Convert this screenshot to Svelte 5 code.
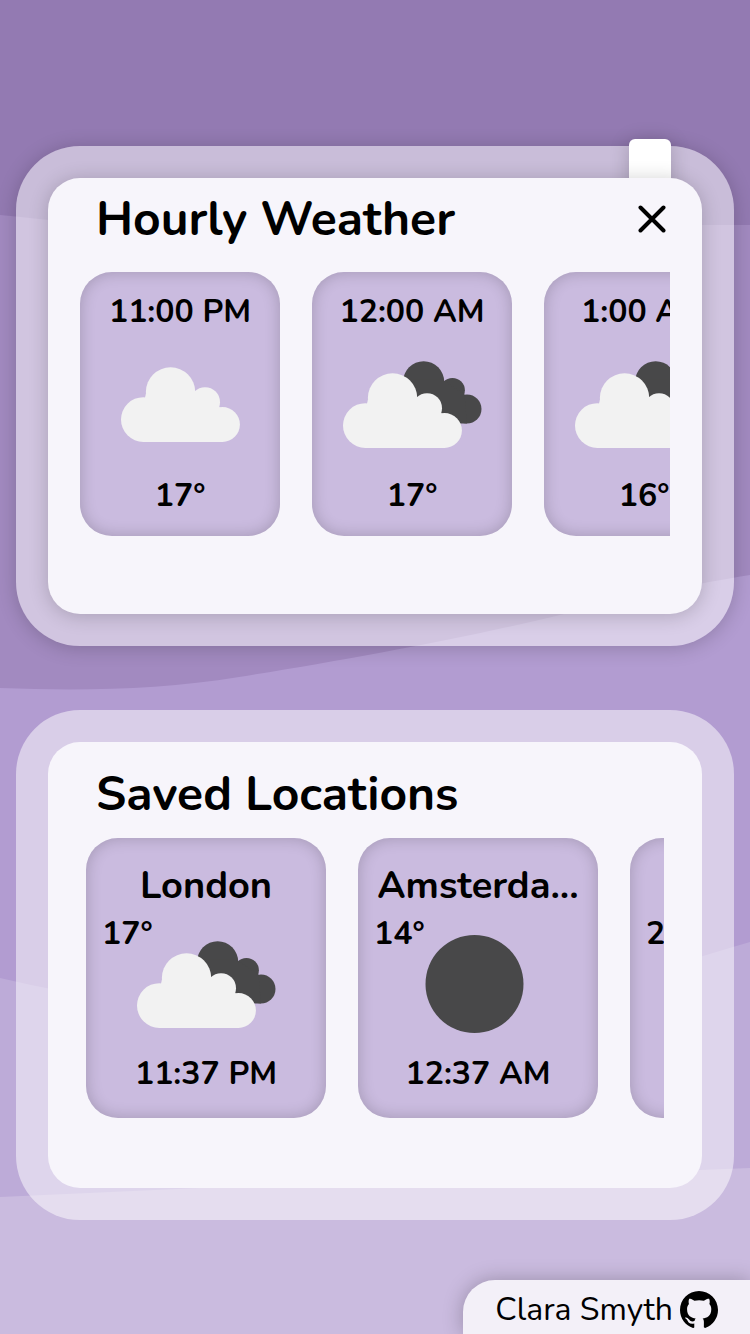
<script>
  const hours = [
    { time: '11:00 PM', icon: 'cloud', temp: 17 },
    { time: '12:00 AM', icon: 'clouds', temp: 17 },
    { time: '1:00 AM', icon: 'clouds', temp: 16 }
  ];

  const places = [
    { name: 'London', temp: 17, icon: 'clouds', time: '11:37 PM' },
    { name: 'Amsterdam', temp: 14, icon: 'moon', time: '12:37 AM' },
    { name: 'Tokyo', temp: 22, icon: 'cloud', time: '7:37 AM' }
  ];

  let showHourly = $state(true);

  const shorten = (name) => (name.length > 8 ? name.slice(0, 8) + '...' : name);
</script>

{#snippet cloud()}
  <circle cx="22.5" cy="52.5" r="22.5" />
  <circle cx="49.8" cy="24.8" r="24.8" />
  <circle cx="84.5" cy="35" r="15" />
  <circle cx="102" cy="57.5" r="17.5" />
  <path d="M22.5 75V38L26 22H72L99 40L102 75Z" />
{/snippet}

{#snippet weatherIcon(kind)}
  <svg class="weather" viewBox="0 0 140 88" aria-hidden="true">
    {#if kind === 'moon'}
      <circle class="dark" cx="66.5" cy="44" r="49" />
    {:else if kind === 'clouds'}
      <g class="dark" transform="translate(40.3 1.3) scale(0.83)">{@render cloud()}</g>
      <g class="light" transform="translate(1 13.3) scale(0.995)">{@render cloud()}</g>
    {:else}
      <g class="light" transform="translate(11 7.3) scale(0.995)">{@render cloud()}</g>
    {/if}
  </svg>
{/snippet}

<div class="page">
  <svg class="waves" viewBox="0 0 750 1334" preserveAspectRatio="none" aria-hidden="true">
    <rect width="750" height="1334" fill="#937ab2" />
    <path fill="#a28ac0" d="M0 215C200 234 330 262 450 250S640 225 700 225H750V1334H0Z" />
    <path fill="#b29cd1" d="M0 688C80 691 160 690 239 677C340 661 470 637 564 614C640 595 700 583 750 575V1334H0Z" />
    <path fill="#bdabd8" d="M0 978C120 1006 240 1020 380 1020S620 980 750 942V1334H0Z" />
    <path fill="#cabbdf" d="M0 1197L200 1188C380 1180 560 1176 750 1168V1334H0Z" />
  </svg>

  <main>
    {#if showHourly}
      <section class="frame raised" aria-labelledby="hourly-title">
        <span class="tab"></span>
        <div class="panel hourly">
          <header>
            <h2 id="hourly-title">Hourly Weather</h2>
            <button type="button" aria-label="Close" onclick={() => (showHourly = false)}>
              <svg viewBox="0 0 28 28" aria-hidden="true"><path d="M2.5 2.5L25.5 25.5M25.5 2.5L2.5 25.5" /></svg>
            </button>
          </header>
          <ul class="strip">
            {#each hours as hour}
              <li class="card hour">
                <span>{hour.time}</span>
                {@render weatherIcon(hour.icon)}
                <span>{hour.temp}°</span>
              </li>
            {/each}
          </ul>
        </div>
      </section>
    {/if}

    <section class="frame" aria-labelledby="saved-title">
      <div class="panel saved">
        <header>
          <h2 id="saved-title">Saved Locations</h2>
        </header>
        <ul class="strip">
          {#each places as place}
            <li class="card place">
              <h3>{shorten(place.name)}</h3>
              <span class="temp">{place.temp}°</span>
              {@render weatherIcon(place.icon)}
              <span class="clock">{place.time}</span>
            </li>
          {/each}
        </ul>
      </div>
    </section>
  </main>

  <footer>
    <a href="#github">
      Clara Smyth
      <svg viewBox="0 0 16 16" aria-hidden="true">
        <path d="M8 0C3.58 0 0 3.58 0 8c0 3.54 2.29 6.53 5.47 7.59.4.07.55-.17.55-.38 0-.19-.01-.82-.01-1.49-2.01.37-2.53-.49-2.69-.94-.09-.23-.48-.94-.82-1.13-.28-.15-.68-.52-.01-.53.63-.01 1.08.58 1.28.82.72 1.21 1.87.87 2.33.66.07-.52.28-.87.51-1.07-1.78-.2-3.64-.89-3.64-3.95 0-.87.31-1.59.82-2.15-.08-.2-.36-1.02.08-2.12 0 0 .67-.21 2.2.82.64-.18 1.32-.27 2-.27s1.36.09 2 .27c1.53-1.04 2.2-.82 2.2-.82.44 1.1.16 1.92.08 2.12.51.56.82 1.27.82 2.15 0 3.07-1.87 3.75-3.65 3.95.29.25.54.73.54 1.48 0 1.07-.01 1.93-.01 2.2 0 .21.15.46.55.38A8.01 8.01 0 0 0 16 8c0-4.42-3.58-8-8-8z" />
      </svg>
    </a>
  </footer>
</div>

<style>
  :global(body) {
    background: #cabbdf;
  }

  .page {
    position: relative;
    display: flex;
    flex-direction: column;
    min-height: 100vh;
    overflow: hidden;
    color: #000;
    font-family: Nunito, Lato, 'Noto Sans', sans-serif;
    font-size: 32px;
    line-height: 40px;
  }

  .waves {
    position: absolute;
    inset: 0;
    width: 100%;
    height: 100%;
  }

  main {
    position: relative;
    flex: 1;
    display: flex;
    flex-direction: column;
    gap: 64px;
    padding: 146px 16px 60px;
  }

  .frame {
    position: relative;
    padding: 32px;
    border-radius: 64px;
    background: rgba(255, 255, 255, 0.5);
  }

  .panel {
    position: relative;
    border-radius: 32px;
    background: #f7f5fb;
  }

  .raised,
  .raised .panel {
    box-shadow: 0 2px 20px rgba(0, 0, 0, 0.2);
  }

  .tab {
    position: absolute;
    top: -7px;
    right: 63px;
    width: 42px;
    height: 60px;
    border-radius: 6px;
    background: #fff;
    box-shadow: 0 2px 20px rgba(0, 0, 0, 0.2);
  }

  .hourly {
    padding: 0 32px 78px;
  }

  .saved {
    padding: 8px 38px 70px;
  }

  header {
    display: flex;
    align-items: center;
    justify-content: space-between;
    height: 88px;
    padding-left: 16px;
  }

  .hourly header {
    height: 82px;
    padding-bottom: 12px;
  }

  .saved header {
    padding-left: 10px;
  }

  h2 {
    margin: 0;
    font-size: 48px;
    line-height: 64px;
    font-weight: 700;
  }

  header button {
    display: flex;
    padding: 4px;
    border: 0;
    background: none;
    cursor: pointer;
  }

  header button svg {
    width: 28px;
    height: 28px;
    fill: none;
    stroke: #000;
    stroke-width: 4;
    stroke-linecap: round;
  }

  .strip {
    display: flex;
    gap: 32px;
    margin: 0;
    padding: 0;
    list-style: none;
    overflow-x: auto;
    scrollbar-width: none;
  }

  .card {
    flex: none;
    box-sizing: border-box;
    display: flex;
    flex-direction: column;
    align-items: center;
    border-radius: 32px;
    background: #cabbdf;
    box-shadow: inset 0 0 16px rgba(0, 0, 0, 0.2);
    font-weight: 700;
  }

  .hour {
    justify-content: space-between;
    width: 200px;
    height: 264px;
    padding: 20px 0;
  }

  .place {
    width: 240px;
    height: 280px;
    padding: 24px 16px;
  }

  h3 {
    margin: 0;
    font-size: 38px;
    line-height: 48px;
    font-weight: 700;
    white-space: nowrap;
  }

  .temp {
    align-self: flex-start;
    margin: 4px 0 -14px;
  }

  .clock {
    margin-top: auto;
  }

  .weather {
    width: 140px;
    height: 88px;
    overflow: visible;
  }

  .light {
    fill: #f2f2f2;
  }

  .dark {
    fill: #484849;
  }

  footer {
    position: relative;
    display: flex;
    justify-content: flex-end;
  }

  footer a {
    display: flex;
    align-items: center;
    gap: 7px;
    padding: 10px 32px 4px;
    border-top-left-radius: 32px;
    background: #f3f0f8;
    box-shadow: 0 0 20px rgba(0, 0, 0, 0.25);
    color: #000;
    text-decoration: none;
  }

  footer svg {
    width: 38px;
    height: 38px;
  }
</style>
